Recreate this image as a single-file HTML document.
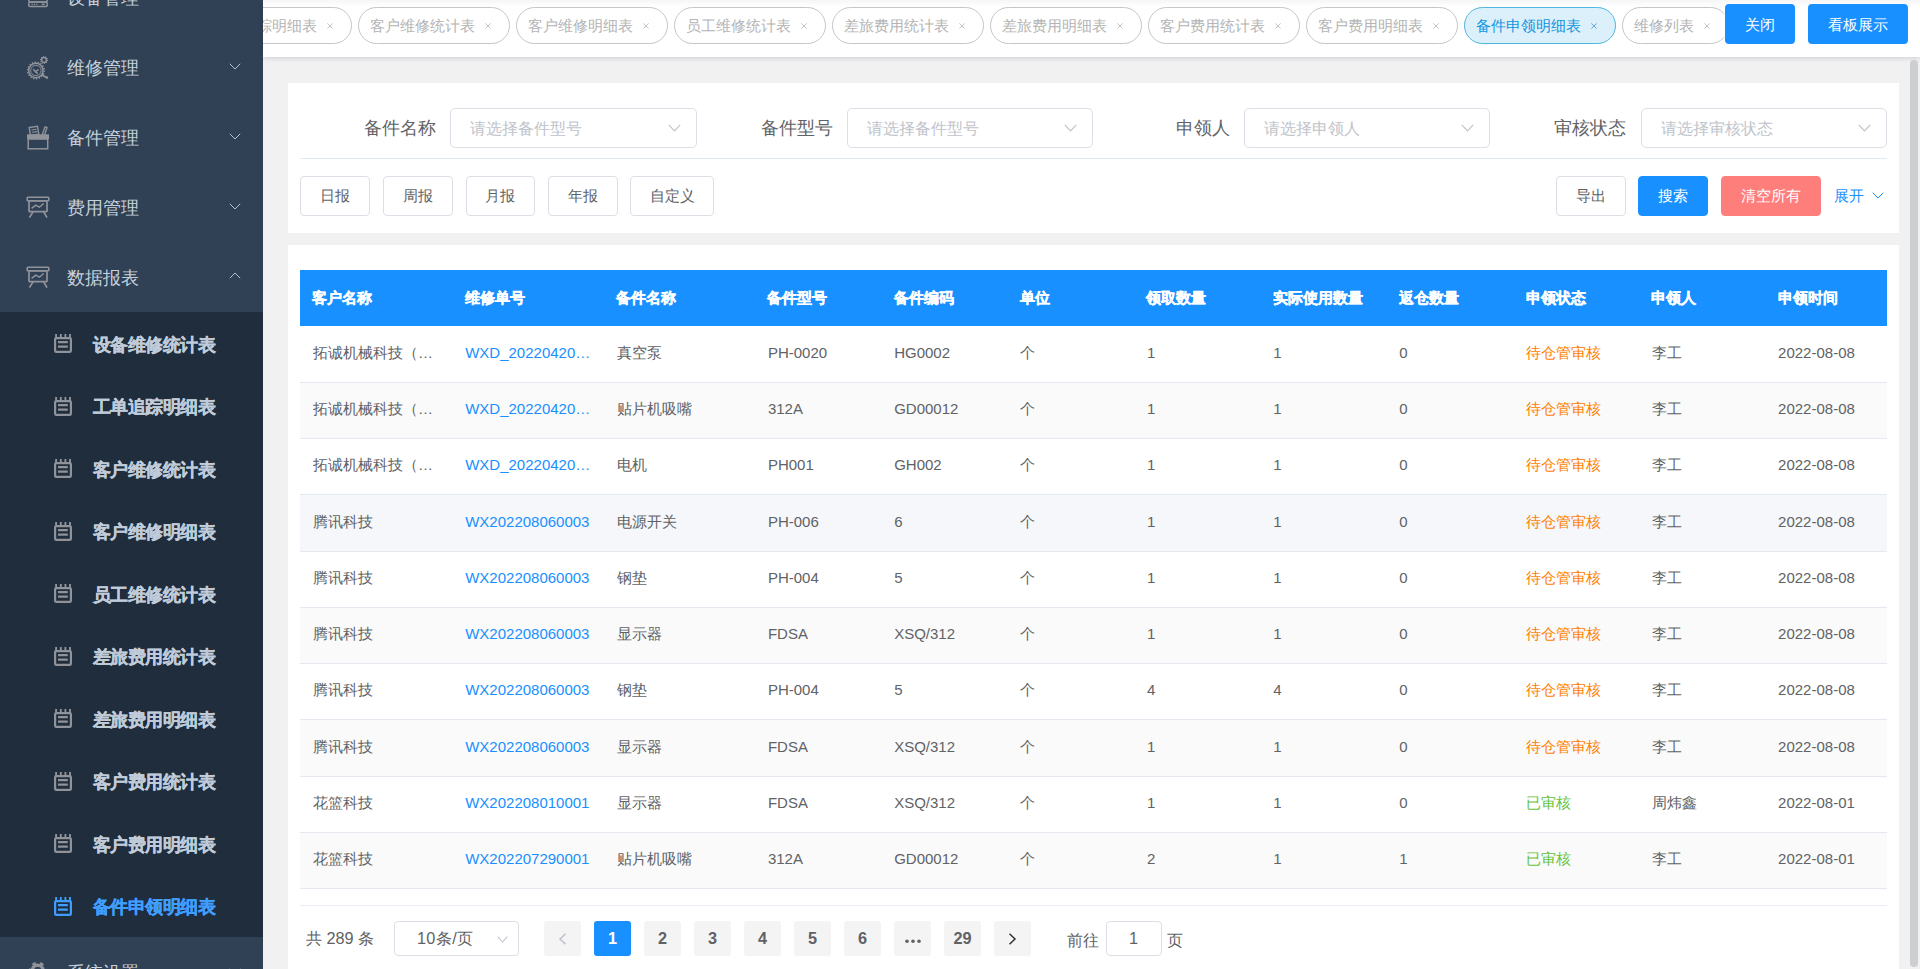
<!DOCTYPE html><html><head><meta charset="utf-8"><title>备件申领明细表</title><style>
*{box-sizing:border-box;margin:0;padding:0}
html,body{width:1920px;height:969px;overflow:hidden}
body{position:relative;background:#f1f1f1;font-family:"Liberation Sans",sans-serif;color:#606266}
.abs{position:absolute}
#side{position:absolute;left:0;top:0;width:263px;height:969px;background:#304156;overflow:hidden}
.mi{position:absolute;left:0;width:263px;height:70px;color:#bfcbd9;font-size:17.5px}
.mi .t{position:absolute;left:67px;top:0.8px;line-height:70px;white-space:nowrap;color:#c6d1dc}
.mi svg.ic{position:absolute}
.mi svg.ar{position:absolute;left:228.5px;width:12px;height:7px}
#sub{position:absolute;left:0;top:312px;width:263px;height:625px;background:#1f2d3d}
.si{position:absolute;left:0;width:263px;height:62.5px;color:#bfcbd9;font-size:17.5px;font-weight:bold;-webkit-text-stroke:0.3px currentColor}
.si .t{position:absolute;left:92.5px;top:1.5px;line-height:62.5px;white-space:nowrap;letter-spacing:-0.5px}
.si svg{position:absolute;left:54px;width:18px;height:19px}
.si.act{color:#409eff}
#hdr{position:absolute;left:263px;top:0;width:1657px;height:57px;background:linear-gradient(#f6f6f6 0,#fcfcfc 4px,#fff 7px);box-shadow:0 1px 5px rgba(0,21,41,.16)}
#tabs{position:absolute;left:0;top:0;width:1461px;height:57px;overflow:hidden}
.tab{position:absolute;top:7px;height:36.5px;width:151.5px;border:1px solid #c6c6c6;border-radius:19px;color:#b4b4b4;font-size:15px;line-height:36.5px;padding-left:11px;white-space:nowrap;background:#fff}
.tab svg.x{position:absolute;right:17.5px;top:15px;width:6px;height:6px}
.tab.act{background:#dcf0fb;border-color:#4fb6dd;color:#0f94e0}
.tab.act .x{color:#5ea7e3}
.hbtn{position:absolute;top:4px;height:40px;background:#1890ff;color:#fff;border-radius:4px;font-size:15px;line-height:42px;text-align:center}
.card{position:absolute;left:288px;width:1611px;background:#fff}
.lbl{position:absolute;top:108px;height:40px;line-height:40px;font-size:17.5px;color:#606266;text-align:right;white-space:nowrap}
.sel{position:absolute;top:108px;height:40px;border:1px solid #dcdfe6;border-radius:5px;background:#fff;font-size:16.25px;color:#c0c4cc;line-height:38px;padding-left:19px;white-space:nowrap}
.sel svg{position:absolute;right:15px;top:15px;width:13px;height:8px}
.btn{position:absolute;top:176px;height:40px;border:1px solid #dcdfe6;border-radius:4px;background:#fff;font-size:15px;color:#606266;line-height:38px;text-align:center;white-space:nowrap}
.btn.pri{background:#1890ff;border-color:#1890ff;color:#fff}
.btn.red{background:#fe7e7b;border-color:#fe7e7b;color:#fff}
#thead{position:absolute;left:300px;top:270px;width:1587px;height:56px;background:#1890ff}
.th{position:absolute;top:-0.5px;line-height:56px;-webkit-text-stroke:0.35px #fff;color:#fff;font-weight:bold;font-size:15px;white-space:nowrap}
.row{position:absolute;left:300px;width:1587px;height:56.25px;border-bottom:1px solid #e4e8ef;background:#fff}
.row.s{background:#fafafa}
.td{position:absolute;top:-1.7px;line-height:55px;font-size:15px;color:#606266;white-space:nowrap}
.lnk{color:#1890ff}
.org{color:#ff8000}
.grn{color:#67c23a}
.pg{position:absolute;top:921px;height:35px;width:37px;background:#f4f4f5;border-radius:3px;color:#606266;font-size:16.25px;font-weight:bold;line-height:35px;text-align:center}
.pg.on{background:#1890ff;color:#fff}
</style></head><body>
<div id="side">
<div class="mi" style="top:-38px"><svg class="ic" style="left:26px;top:28px;width:24px;height:20px" viewBox="0 0 24 20"><rect x="2.8" y="3" width="18.4" height="9" rx="1.5" fill="none" stroke="#909399" stroke-width="1.5"/><rect x="2.8" y="12" width="18.4" height="4.5" rx="1.2" fill="none" stroke="#909399" stroke-width="1.5"/><path d="M5.5 14.3h6.5" stroke="#909399" stroke-width="1.2" stroke-dasharray="1.3 0.9"/><path d="M15.8 14.3h2.8" stroke="#909399" stroke-width="1.5"/></svg><span class="t">设备管理</span><svg class="ar" style="top:31px" viewBox="0 0 12 7"><path d="M0.8 0.8 L6 6 L11.2 0.8" fill="none" stroke="#b4c0ce" stroke-width="1"/></svg></div>
<div class="mi" style="top:32px"><svg class="ic" style="left:26px;top:22px;width:24px;height:26px" viewBox="0 0 24 26">
<circle cx="9.9" cy="16.5" r="7.2" fill="none" stroke="#909399" stroke-width="1.5"/>
<circle cx="9.9" cy="16.5" r="8.3" fill="none" stroke="#909399" stroke-width="1.5" stroke-dasharray="1.3 1.6"/>
<circle cx="9.9" cy="16.5" r="5.2" fill="none" stroke="#909399" stroke-width="1"/>
<path d="M7.3 15.2 L9.2 17.6 L12.6 15.6 M9.2 17.6 L11.8 19.6" fill="none" stroke="#909399" stroke-width="1.5"/>
<circle cx="18" cy="6" r="2.4" fill="none" stroke="#909399" stroke-width="1.5"/>
<circle cx="18" cy="6" r="3.4" fill="none" stroke="#909399" stroke-width="1.2" stroke-dasharray="1 1.1"/>
<path d="M15.4 20.6 L20 23.2" stroke="#909399" stroke-width="1.7"/><circle cx="20.8" cy="23.6" r="1.4" fill="#909399"/>
</svg><span class="t">维修管理</span><svg class="ar" style="top:31px" viewBox="0 0 12 7"><path d="M0.8 0.8 L6 6 L11.2 0.8" fill="none" stroke="#b4c0ce" stroke-width="1"/></svg></div>
<div class="mi" style="top:102px"><svg class="ic" style="left:26px;top:23px;width:24px;height:26px" viewBox="0 0 24 26">
<rect x="2.2" y="14" width="19.5" height="9.8" fill="none" stroke="#909399" stroke-width="1.5"/>
<rect x="1" y="9.3" width="22" height="4.8" fill="#909399"/>
<path d="M3.2 2.5 L11.5 1.3 L12.8 9.3 L4.5 10.5 Z" fill="none" stroke="#909399" stroke-width="1.4"/>
<path d="M5.5 5 L10.5 4.3 M6 7.3 L11 6.6" stroke="#909399" stroke-width="1.1"/>
<path d="M16 10.5 L19 1.8 L21 2.5 L18.3 11" fill="none" stroke="#909399" stroke-width="1.4"/>
</svg><span class="t">备件管理</span><svg class="ar" style="top:31px" viewBox="0 0 12 7"><path d="M0.8 0.8 L6 6 L11.2 0.8" fill="none" stroke="#b4c0ce" stroke-width="1"/></svg></div>
<div class="mi" style="top:172px"><svg class="ic" style="left:26px;top:23.5px;width:24px;height:24px" viewBox="0 0 24 24">
<rect x="1.2" y="1.2" width="21.6" height="3.6" rx="0.8" fill="none" stroke="#909399" stroke-width="1.6"/>
<rect x="3" y="4.8" width="18" height="10.8" rx="0.6" fill="none" stroke="#909399" stroke-width="1.7"/>
<path d="M5.6 12.4 L9.7 9.2 L13.4 11.2 L17.6 7.5" fill="none" stroke="#909399" stroke-width="1.5"/>
<path d="M7.2 15.6 L3.4 21.6 M17.6 15.6 L21 21.6" stroke="#909399" stroke-width="1.7"/>
</svg><span class="t">费用管理</span><svg class="ar" style="top:31px" viewBox="0 0 12 7"><path d="M0.8 0.8 L6 6 L11.2 0.8" fill="none" stroke="#b4c0ce" stroke-width="1"/></svg></div>
<div class="mi" style="top:242px"><svg class="ic" style="left:26px;top:23.5px;width:24px;height:24px" viewBox="0 0 24 24">
<rect x="1.2" y="1.2" width="21.6" height="3.6" rx="0.8" fill="none" stroke="#909399" stroke-width="1.6"/>
<rect x="3" y="4.8" width="18" height="10.8" rx="0.6" fill="none" stroke="#909399" stroke-width="1.7"/>
<path d="M5.6 12.4 L9.7 9.2 L13.4 11.2 L17.6 7.5" fill="none" stroke="#909399" stroke-width="1.5"/>
<path d="M7.2 15.6 L3.4 21.6 M17.6 15.6 L21 21.6" stroke="#909399" stroke-width="1.7"/>
</svg><span class="t">数据报表</span><svg class="ar" style="top:30px" viewBox="0 0 12 7"><path d="M0.8 6.2 L6 1 L11.2 6.2" fill="none" stroke="#b4c0ce" stroke-width="1"/></svg></div>
<div id="sub">
<div class="si" style="top:0.0px"><svg style="top:22px" viewBox="0 0 18 19"><path d="M2.1 0v4.2M6.8 0v4.2M11.4 0v4.2M16 0v4.2" stroke="#909399" stroke-width="1.9"/><rect x="1.1" y="4.1" width="15.8" height="13.8" rx="1.2" fill="none" stroke="#909399" stroke-width="2.2"/><path d="M4 8.1h9.8M4 12.7h9.8" stroke="#909399" stroke-width="2.2"/></svg><span class="t">设备维修统计表</span></div>
<div class="si" style="top:62.5px"><svg style="top:22px" viewBox="0 0 18 19"><path d="M2.1 0v4.2M6.8 0v4.2M11.4 0v4.2M16 0v4.2" stroke="#909399" stroke-width="1.9"/><rect x="1.1" y="4.1" width="15.8" height="13.8" rx="1.2" fill="none" stroke="#909399" stroke-width="2.2"/><path d="M4 8.1h9.8M4 12.7h9.8" stroke="#909399" stroke-width="2.2"/></svg><span class="t">工单追踪明细表</span></div>
<div class="si" style="top:125.0px"><svg style="top:22px" viewBox="0 0 18 19"><path d="M2.1 0v4.2M6.8 0v4.2M11.4 0v4.2M16 0v4.2" stroke="#909399" stroke-width="1.9"/><rect x="1.1" y="4.1" width="15.8" height="13.8" rx="1.2" fill="none" stroke="#909399" stroke-width="2.2"/><path d="M4 8.1h9.8M4 12.7h9.8" stroke="#909399" stroke-width="2.2"/></svg><span class="t">客户维修统计表</span></div>
<div class="si" style="top:187.5px"><svg style="top:22px" viewBox="0 0 18 19"><path d="M2.1 0v4.2M6.8 0v4.2M11.4 0v4.2M16 0v4.2" stroke="#909399" stroke-width="1.9"/><rect x="1.1" y="4.1" width="15.8" height="13.8" rx="1.2" fill="none" stroke="#909399" stroke-width="2.2"/><path d="M4 8.1h9.8M4 12.7h9.8" stroke="#909399" stroke-width="2.2"/></svg><span class="t">客户维修明细表</span></div>
<div class="si" style="top:250.0px"><svg style="top:22px" viewBox="0 0 18 19"><path d="M2.1 0v4.2M6.8 0v4.2M11.4 0v4.2M16 0v4.2" stroke="#909399" stroke-width="1.9"/><rect x="1.1" y="4.1" width="15.8" height="13.8" rx="1.2" fill="none" stroke="#909399" stroke-width="2.2"/><path d="M4 8.1h9.8M4 12.7h9.8" stroke="#909399" stroke-width="2.2"/></svg><span class="t">员工维修统计表</span></div>
<div class="si" style="top:312.5px"><svg style="top:22px" viewBox="0 0 18 19"><path d="M2.1 0v4.2M6.8 0v4.2M11.4 0v4.2M16 0v4.2" stroke="#909399" stroke-width="1.9"/><rect x="1.1" y="4.1" width="15.8" height="13.8" rx="1.2" fill="none" stroke="#909399" stroke-width="2.2"/><path d="M4 8.1h9.8M4 12.7h9.8" stroke="#909399" stroke-width="2.2"/></svg><span class="t">差旅费用统计表</span></div>
<div class="si" style="top:375.0px"><svg style="top:22px" viewBox="0 0 18 19"><path d="M2.1 0v4.2M6.8 0v4.2M11.4 0v4.2M16 0v4.2" stroke="#909399" stroke-width="1.9"/><rect x="1.1" y="4.1" width="15.8" height="13.8" rx="1.2" fill="none" stroke="#909399" stroke-width="2.2"/><path d="M4 8.1h9.8M4 12.7h9.8" stroke="#909399" stroke-width="2.2"/></svg><span class="t">差旅费用明细表</span></div>
<div class="si" style="top:437.5px"><svg style="top:22px" viewBox="0 0 18 19"><path d="M2.1 0v4.2M6.8 0v4.2M11.4 0v4.2M16 0v4.2" stroke="#909399" stroke-width="1.9"/><rect x="1.1" y="4.1" width="15.8" height="13.8" rx="1.2" fill="none" stroke="#909399" stroke-width="2.2"/><path d="M4 8.1h9.8M4 12.7h9.8" stroke="#909399" stroke-width="2.2"/></svg><span class="t">客户费用统计表</span></div>
<div class="si" style="top:500.0px"><svg style="top:22px" viewBox="0 0 18 19"><path d="M2.1 0v4.2M6.8 0v4.2M11.4 0v4.2M16 0v4.2" stroke="#909399" stroke-width="1.9"/><rect x="1.1" y="4.1" width="15.8" height="13.8" rx="1.2" fill="none" stroke="#909399" stroke-width="2.2"/><path d="M4 8.1h9.8M4 12.7h9.8" stroke="#909399" stroke-width="2.2"/></svg><span class="t">客户费用明细表</span></div>
<div class="si act" style="top:562.5px"><svg style="top:22px" viewBox="0 0 18 19"><path d="M2.1 0v4.2M6.8 0v4.2M11.4 0v4.2M16 0v4.2" stroke="#409eff" stroke-width="1.9"/><rect x="1.1" y="4.1" width="15.8" height="13.8" rx="1.2" fill="none" stroke="#409eff" stroke-width="2.2"/><path d="M4 8.1h9.8M4 12.7h9.8" stroke="#409eff" stroke-width="2.2"/></svg><span class="t">备件申领明细表</span></div>
</div>
<div class="mi" style="top:937px"><svg class="ic" style="left:28px;top:24px;width:20px;height:20px" viewBox="0 0 20 20"><circle cx="9.7" cy="9.5" r="5.4" fill="none" stroke="#909399" stroke-width="3.4"/><circle cx="9.7" cy="9.5" r="7.6" fill="none" stroke="#909399" stroke-width="2.6" stroke-dasharray="3.6 4.36" stroke-dashoffset="1.8"/></svg><span class="t">系统设置</span><svg class="ar" style="top:31px" viewBox="0 0 12 7"><path d="M0.8 0.8 L6 6 L11.2 0.8" fill="none" stroke="#b4c0ce" stroke-width="1"/></svg></div>
</div>
<div id="hdr"><div id="tabs">
<div class="tab" style="left:-63px;width:151.5px">工单追踪明细表<svg class="x" viewBox="0 0 6 6"><path d="M0.4 0.4L5.6 5.6M5.6 0.4L0.4 5.6" stroke="#c4c4c4" stroke-width="1"/></svg></div>
<div class="tab" style="left:95px;width:151.5px">客户维修统计表<svg class="x" viewBox="0 0 6 6"><path d="M0.4 0.4L5.6 5.6M5.6 0.4L0.4 5.6" stroke="#c4c4c4" stroke-width="1"/></svg></div>
<div class="tab" style="left:253px;width:151.5px">客户维修明细表<svg class="x" viewBox="0 0 6 6"><path d="M0.4 0.4L5.6 5.6M5.6 0.4L0.4 5.6" stroke="#c4c4c4" stroke-width="1"/></svg></div>
<div class="tab" style="left:411px;width:151.5px">员工维修统计表<svg class="x" viewBox="0 0 6 6"><path d="M0.4 0.4L5.6 5.6M5.6 0.4L0.4 5.6" stroke="#c4c4c4" stroke-width="1"/></svg></div>
<div class="tab" style="left:569px;width:151.5px">差旅费用统计表<svg class="x" viewBox="0 0 6 6"><path d="M0.4 0.4L5.6 5.6M5.6 0.4L0.4 5.6" stroke="#c4c4c4" stroke-width="1"/></svg></div>
<div class="tab" style="left:727px;width:151.5px">差旅费用明细表<svg class="x" viewBox="0 0 6 6"><path d="M0.4 0.4L5.6 5.6M5.6 0.4L0.4 5.6" stroke="#c4c4c4" stroke-width="1"/></svg></div>
<div class="tab" style="left:885px;width:151.5px">客户费用统计表<svg class="x" viewBox="0 0 6 6"><path d="M0.4 0.4L5.6 5.6M5.6 0.4L0.4 5.6" stroke="#c4c4c4" stroke-width="1"/></svg></div>
<div class="tab" style="left:1043px;width:151.5px">客户费用明细表<svg class="x" viewBox="0 0 6 6"><path d="M0.4 0.4L5.6 5.6M5.6 0.4L0.4 5.6" stroke="#c4c4c4" stroke-width="1"/></svg></div>
<div class="tab act" style="left:1201px;width:151.5px">备件申领明细表<svg class="x" viewBox="0 0 6 6"><path d="M0.4 0.4L5.6 5.6M5.6 0.4L0.4 5.6" stroke="#6aa6e2" stroke-width="1"/></svg></div>
<div class="tab" style="left:1359px;width:106.5px">维修列表<svg class="x" viewBox="0 0 6 6"><path d="M0.4 0.4L5.6 5.6M5.6 0.4L0.4 5.6" stroke="#c4c4c4" stroke-width="1"/></svg></div>
</div>
<div class="hbtn" style="left:1462px;width:70px">关闭</div>
<div class="hbtn" style="left:1545px;width:100px">看板展示</div>
</div>
<div class="card" style="top:83px;height:150px"></div>
<div class="lbl" style="left:300.0px;width:136px">备件名称</div>
<div class="sel" style="left:450.4px;width:246.3px">请选择备件型号<svg viewBox="0 0 13 8"><path d="M0.8 0.8L6.5 6.8L12.2 0.8" fill="none" stroke="#c0c4cc" stroke-width="1.2"/></svg></div>
<div class="lbl" style="left:696.75px;width:136px">备件型号</div>
<div class="sel" style="left:847.15px;width:246.3px">请选择备件型号<svg viewBox="0 0 13 8"><path d="M0.8 0.8L6.5 6.8L12.2 0.8" fill="none" stroke="#c0c4cc" stroke-width="1.2"/></svg></div>
<div class="lbl" style="left:1093.5px;width:136px">申领人</div>
<div class="sel" style="left:1243.9px;width:246.3px">请选择申领人<svg viewBox="0 0 13 8"><path d="M0.8 0.8L6.5 6.8L12.2 0.8" fill="none" stroke="#c0c4cc" stroke-width="1.2"/></svg></div>
<div class="lbl" style="left:1490.25px;width:136px">审核状态</div>
<div class="sel" style="left:1640.65px;width:246.3px">请选择审核状态<svg viewBox="0 0 13 8"><path d="M0.8 0.8L6.5 6.8L12.2 0.8" fill="none" stroke="#c0c4cc" stroke-width="1.2"/></svg></div>
<div class="abs" style="left:300px;top:158px;width:1587px;height:1px;background:#dcecef"></div>
<div class="btn" style="left:300px;width:69.5px">日报</div>
<div class="btn" style="left:383.3px;width:69.5px">周报</div>
<div class="btn" style="left:465.5px;width:69.5px">月报</div>
<div class="btn" style="left:548px;width:69.5px">年报</div>
<div class="btn" style="left:630.4px;width:84px">自定义</div>
<div class="btn" style="left:1556px;width:69.5px">导出</div>
<div class="btn pri" style="left:1638px;width:70px">搜索</div>
<div class="btn red" style="left:1721px;width:100px">清空所有</div>
<div class="abs" style="left:1834px;top:176px;height:40px;line-height:40px;font-size:15px;color:#1890ff;white-space:nowrap">展开</div>
<svg class="abs" style="left:1872px;top:192px;width:12px;height:7px" viewBox="0 0 12 7"><path d="M0.8 0.8L6 6L11.2 0.8" fill="none" stroke="#1890ff" stroke-width="1"/></svg>
<div class="card" style="top:245px;height:724px"></div>
<div id="thead">
<div class="th" style="left:12.25px">客户名称</div>
<div class="th" style="left:164.5px">维修单号</div>
<div class="th" style="left:316px">备件名称</div>
<div class="th" style="left:467.20000000000005px">备件型号</div>
<div class="th" style="left:593.5px">备件编码</div>
<div class="th" style="left:719.5px">单位</div>
<div class="th" style="left:846.4000000000001px">领取数量</div>
<div class="th" style="left:972.5999999999999px">实际使用数量</div>
<div class="th" style="left:1098.6px">返仓数量</div>
<div class="th" style="left:1225.5px">申领状态</div>
<div class="th" style="left:1351.2px">申领人</div>
<div class="th" style="left:1478.1px">申领时间</div>
</div>
<div class="row" style="top:326.5px">
<div class="td" style="left:12.95px">拓诚机械科技（…</div>
<div class="td lnk" style="left:165.2px">WXD_20220420…</div>
<div class="td" style="left:316.7px">真空泵</div>
<div class="td" style="left:467.90000000000003px">PH-0020</div>
<div class="td" style="left:594.2px">HG0002</div>
<div class="td" style="left:720.2px">个</div>
<div class="td" style="left:847.1000000000001px">1</div>
<div class="td" style="left:973.3px">1</div>
<div class="td" style="left:1099.3px">0</div>
<div class="td org" style="left:1226.2px">待仓管审核</div>
<div class="td" style="left:1351.9px">李工</div>
<div class="td" style="left:1478.1px">2022-08-08</div>
</div>
<div class="row s" style="top:382.75px">
<div class="td" style="left:12.95px">拓诚机械科技（…</div>
<div class="td lnk" style="left:165.2px">WXD_20220420…</div>
<div class="td" style="left:316.7px">贴片机吸嘴</div>
<div class="td" style="left:467.90000000000003px">312A</div>
<div class="td" style="left:594.2px">GD00012</div>
<div class="td" style="left:720.2px">个</div>
<div class="td" style="left:847.1000000000001px">1</div>
<div class="td" style="left:973.3px">1</div>
<div class="td" style="left:1099.3px">0</div>
<div class="td org" style="left:1226.2px">待仓管审核</div>
<div class="td" style="left:1351.9px">李工</div>
<div class="td" style="left:1478.1px">2022-08-08</div>
</div>
<div class="row" style="top:439.0px">
<div class="td" style="left:12.95px">拓诚机械科技（…</div>
<div class="td lnk" style="left:165.2px">WXD_20220420…</div>
<div class="td" style="left:316.7px">电机</div>
<div class="td" style="left:467.90000000000003px">PH001</div>
<div class="td" style="left:594.2px">GH002</div>
<div class="td" style="left:720.2px">个</div>
<div class="td" style="left:847.1000000000001px">1</div>
<div class="td" style="left:973.3px">1</div>
<div class="td" style="left:1099.3px">0</div>
<div class="td org" style="left:1226.2px">待仓管审核</div>
<div class="td" style="left:1351.9px">李工</div>
<div class="td" style="left:1478.1px">2022-08-08</div>
</div>
<div class="row s" style="top:495.25px;background:#f5f7fa">
<div class="td" style="left:12.95px">腾讯科技</div>
<div class="td lnk" style="left:165.2px">WX202208060003</div>
<div class="td" style="left:316.7px">电源开关</div>
<div class="td" style="left:467.90000000000003px">PH-006</div>
<div class="td" style="left:594.2px">6</div>
<div class="td" style="left:720.2px">个</div>
<div class="td" style="left:847.1000000000001px">1</div>
<div class="td" style="left:973.3px">1</div>
<div class="td" style="left:1099.3px">0</div>
<div class="td org" style="left:1226.2px">待仓管审核</div>
<div class="td" style="left:1351.9px">李工</div>
<div class="td" style="left:1478.1px">2022-08-08</div>
</div>
<div class="row" style="top:551.5px">
<div class="td" style="left:12.95px">腾讯科技</div>
<div class="td lnk" style="left:165.2px">WX202208060003</div>
<div class="td" style="left:316.7px">钢垫</div>
<div class="td" style="left:467.90000000000003px">PH-004</div>
<div class="td" style="left:594.2px">5</div>
<div class="td" style="left:720.2px">个</div>
<div class="td" style="left:847.1000000000001px">1</div>
<div class="td" style="left:973.3px">1</div>
<div class="td" style="left:1099.3px">0</div>
<div class="td org" style="left:1226.2px">待仓管审核</div>
<div class="td" style="left:1351.9px">李工</div>
<div class="td" style="left:1478.1px">2022-08-08</div>
</div>
<div class="row s" style="top:607.75px">
<div class="td" style="left:12.95px">腾讯科技</div>
<div class="td lnk" style="left:165.2px">WX202208060003</div>
<div class="td" style="left:316.7px">显示器</div>
<div class="td" style="left:467.90000000000003px">FDSA</div>
<div class="td" style="left:594.2px">XSQ/312</div>
<div class="td" style="left:720.2px">个</div>
<div class="td" style="left:847.1000000000001px">1</div>
<div class="td" style="left:973.3px">1</div>
<div class="td" style="left:1099.3px">0</div>
<div class="td org" style="left:1226.2px">待仓管审核</div>
<div class="td" style="left:1351.9px">李工</div>
<div class="td" style="left:1478.1px">2022-08-08</div>
</div>
<div class="row" style="top:664.0px">
<div class="td" style="left:12.95px">腾讯科技</div>
<div class="td lnk" style="left:165.2px">WX202208060003</div>
<div class="td" style="left:316.7px">钢垫</div>
<div class="td" style="left:467.90000000000003px">PH-004</div>
<div class="td" style="left:594.2px">5</div>
<div class="td" style="left:720.2px">个</div>
<div class="td" style="left:847.1000000000001px">4</div>
<div class="td" style="left:973.3px">4</div>
<div class="td" style="left:1099.3px">0</div>
<div class="td org" style="left:1226.2px">待仓管审核</div>
<div class="td" style="left:1351.9px">李工</div>
<div class="td" style="left:1478.1px">2022-08-08</div>
</div>
<div class="row s" style="top:720.25px">
<div class="td" style="left:12.95px">腾讯科技</div>
<div class="td lnk" style="left:165.2px">WX202208060003</div>
<div class="td" style="left:316.7px">显示器</div>
<div class="td" style="left:467.90000000000003px">FDSA</div>
<div class="td" style="left:594.2px">XSQ/312</div>
<div class="td" style="left:720.2px">个</div>
<div class="td" style="left:847.1000000000001px">1</div>
<div class="td" style="left:973.3px">1</div>
<div class="td" style="left:1099.3px">0</div>
<div class="td org" style="left:1226.2px">待仓管审核</div>
<div class="td" style="left:1351.9px">李工</div>
<div class="td" style="left:1478.1px">2022-08-08</div>
</div>
<div class="row" style="top:776.5px">
<div class="td" style="left:12.95px">花篮科技</div>
<div class="td lnk" style="left:165.2px">WX202208010001</div>
<div class="td" style="left:316.7px">显示器</div>
<div class="td" style="left:467.90000000000003px">FDSA</div>
<div class="td" style="left:594.2px">XSQ/312</div>
<div class="td" style="left:720.2px">个</div>
<div class="td" style="left:847.1000000000001px">1</div>
<div class="td" style="left:973.3px">1</div>
<div class="td" style="left:1099.3px">0</div>
<div class="td grn" style="left:1226.2px">已审核</div>
<div class="td" style="left:1351.9px">周炜鑫</div>
<div class="td" style="left:1478.1px">2022-08-01</div>
</div>
<div class="row s" style="top:832.75px">
<div class="td" style="left:12.95px">花篮科技</div>
<div class="td lnk" style="left:165.2px">WX202207290001</div>
<div class="td" style="left:316.7px">贴片机吸嘴</div>
<div class="td" style="left:467.90000000000003px">312A</div>
<div class="td" style="left:594.2px">GD00012</div>
<div class="td" style="left:720.2px">个</div>
<div class="td" style="left:847.1000000000001px">2</div>
<div class="td" style="left:973.3px">1</div>
<div class="td" style="left:1099.3px">1</div>
<div class="td grn" style="left:1226.2px">已审核</div>
<div class="td" style="left:1351.9px">李工</div>
<div class="td" style="left:1478.1px">2022-08-01</div>
</div>
<div class="abs" style="left:300px;top:905px;width:1587px;height:1px;background:#ebeef5"></div>
<div class="abs" style="left:306px;top:921px;height:35px;line-height:35px;font-size:16.25px;color:#606266;white-space:nowrap">共 289 条</div>
<div class="abs" style="left:394.4px;top:921px;width:124.5px;height:35px;border:1px solid #dcdfe6;border-radius:4px;line-height:33px;font-size:16.25px;color:#606266;padding-left:21.5px;letter-spacing:0.4px">10条/页<svg class="abs" style="left:102px;top:14px;width:11px;height:7px" viewBox="0 0 11 7"><path d="M0.7 0.7L5.5 6L10.3 0.7" fill="none" stroke="#c0c4cc" stroke-width="1.1"/></svg></div>
<div class="pg" style="left:544px"><svg style="margin-top:12px" width="9" height="12" viewBox="0 0 9 12"><path d="M7.5 0.8L2 6L7.5 11.2" fill="none" stroke="#c0c4cc" stroke-width="1.6"/></svg></div>
<div class="pg on" style="left:594px">1</div>
<div class="pg" style="left:644px">2</div>
<div class="pg" style="left:694px">3</div>
<div class="pg" style="left:744px">4</div>
<div class="pg" style="left:794px">5</div>
<div class="pg" style="left:844px">6</div>
<div class="pg" style="left:894px"><svg style="margin-top:15px" width="16" height="5" viewBox="0 0 16 5"><circle cx="2" cy="2.2" r="1.8" fill="#606266"/><circle cx="8" cy="2.2" r="1.8" fill="#606266"/><circle cx="14" cy="2.2" r="1.8" fill="#606266"/></svg></div>
<div class="pg" style="left:944px">29</div>
<div class="pg" style="left:994px"><svg style="margin-top:12px" width="9" height="12" viewBox="0 0 9 12"><path d="M1.5 0.8L7 6L1.5 11.2" fill="none" stroke="#303133" stroke-width="1.5"/></svg></div>
<div class="abs" style="left:1067px;top:922.5px;height:35px;line-height:35px;font-size:16.25px;color:#606266">前往</div>
<div class="abs" style="left:1105.5px;top:921px;width:56px;height:35px;border:1px solid #dcdfe6;border-radius:4px;line-height:33px;font-size:16.25px;color:#606266;text-align:center">1</div>
<div class="abs" style="left:1167px;top:922.5px;height:35px;line-height:35px;font-size:16.25px;color:#606266">页</div>
<div class="abs" style="left:1910px;top:60px;width:8px;height:907px;background:#cdced1;border-radius:4px"></div>
</body></html>
